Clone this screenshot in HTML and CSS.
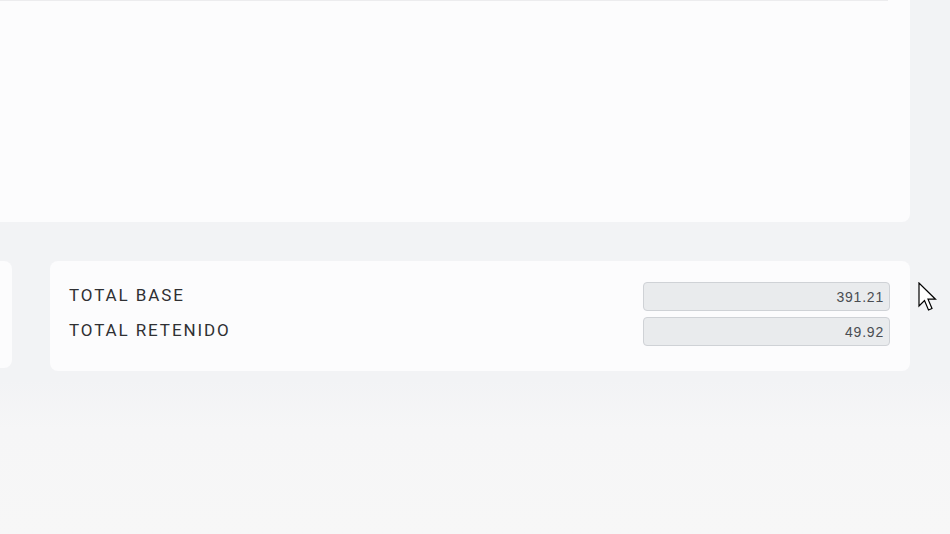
FILE: index.html
```html
<!DOCTYPE html>
<html lang="es">
<head>
<meta charset="utf-8">
<title>Totales</title>
<link rel="stylesheet" href="styles.css">
</head>
<body>
<div class="page">
  <section class="card card-top">
    <div class="table-edge"></div>
  </section>
  <div class="row">
    <section class="card card-side"></section>
    <section class="card card-totals">
      <div class="total-row">
        <span class="label">TOTAL BASE</span>
        <input class="amount" type="text" value="391.21" readonly>
      </div>
      <div class="total-row">
        <span class="label">TOTAL RETENIDO</span>
        <input class="amount" type="text" value="49.92" readonly>
      </div>
    </section>
    <svg class="cursor" width="20" height="32" viewBox="0 0 20 32" aria-hidden="true">
      <path d="M1 1 L1 24 L6.5 18.5 L10.5 28 L14 26.5 L10 17.2 L17.5 17.2 Z" fill="#fff" stroke="#000" stroke-width="1.2" stroke-linejoin="miter"/>
    </svg>
  </div>
</div>
</body>
</html>
```

FILE: styles.css
```css
html, body {
  margin: 0;
  padding: 0;
}
body {
  width: 950px;
  height: 534px;
  overflow: hidden;
  background: linear-gradient(to bottom, #f2f3f5 0px, #f2f3f5 380px, #f6f6f7 430px, #f7f7f7 534px);
  font-family: Roboto, "Liberation Sans", Arial, sans-serif;
}
.page {
  display: flex;
  flex-direction: column;
  gap: 39px;
  padding-right: 40px;
}
.card {
  background: #fcfcfd;
  border-radius: 8px;
}
.card-top {
  height: 222px;
  margin-left: -20px;
  border-top-left-radius: 0;
  border-top-right-radius: 0;
}
.table-edge {
  margin-left: 20px;
  width: 888px;
  height: 1px;
  background: #ececee;
}
.row {
  display: flex;
  align-items: flex-start;
  gap: 38px;
  margin-left: -100px;
  position: relative;
}
.card-side {
  width: 112px;
  height: 107px;
}
.card-totals {
  flex: 1;
  display: flex;
  flex-direction: column;
  gap: 6px;
  padding: 21px 20px 25px 19px;
}
.total-row {
  display: flex;
  align-items: center;
  justify-content: space-between;
}
.label {
  font-size: 17px;
  letter-spacing: 1.9px;
  color: #2f3033;
  padding-bottom: 4px;
}
.amount {
  box-sizing: border-box;
  width: 247px;
  height: 29px;
  margin: 0;
  padding: 0 5px 0 6px;
  border: 1px solid #cfd2d6;
  border-radius: 4px;
  background: #e9ebed;
  text-align: right;
  font-family: "Liberation Sans", Arial, sans-serif;
  font-size: 14px;
  letter-spacing: 0.8px;
  color: #4a4d52;
  outline: none;
}
.cursor {
  position: absolute;
  left: 1018px;
  top: 21px;
}
```
